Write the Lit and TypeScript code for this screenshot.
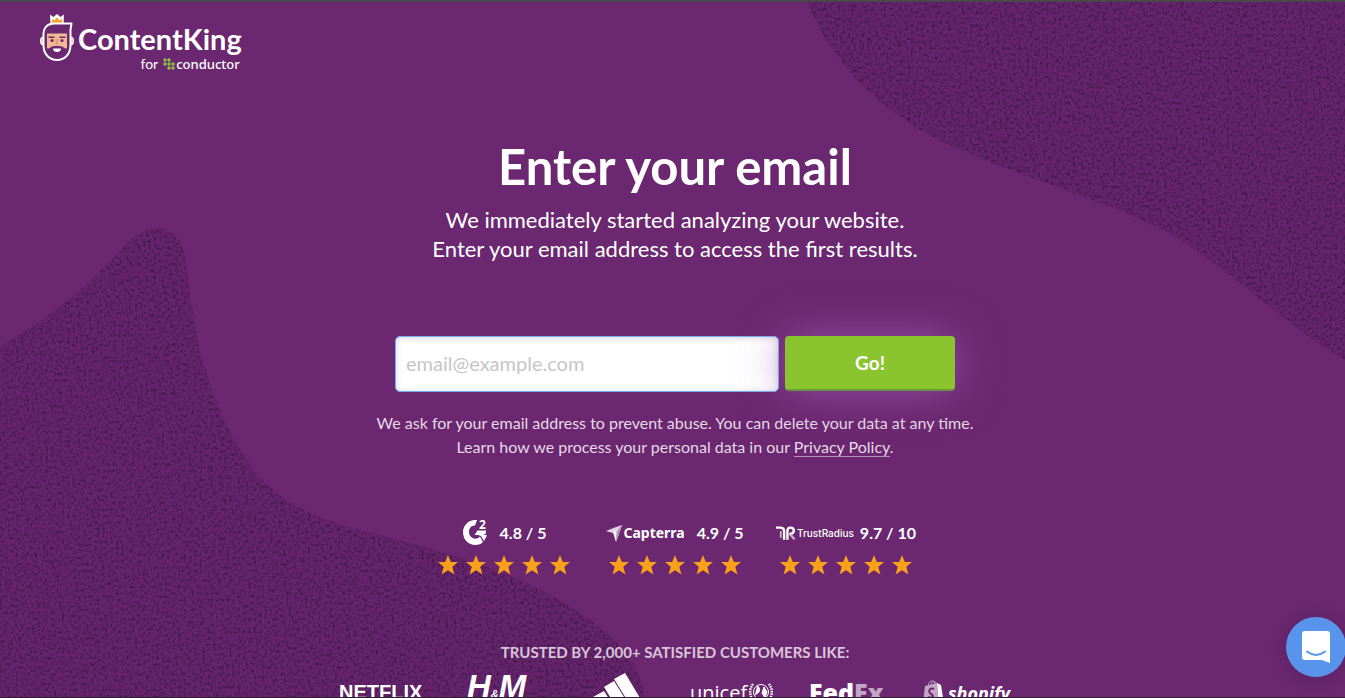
import { LitElement, html, css, svg } from "lit";
import { customElement } from "lit/decorators.js";

@customElement("app-backdrop")
class AppBackdrop extends LitElement {
  static styles = css`
    :host { display: block; }
    .art { display: block; width: 100%; height: 100%; }
  `;
  render() {
    return html`
      <svg class="art" viewBox="0 0 1345 698" preserveAspectRatio="xMinYMin slice" aria-hidden="true">
        <defs>
          <filter id="grain" x="0" y="0" width="100%" height="100%" color-interpolation-filters="sRGB">
            <feTurbulence type="fractalNoise" baseFrequency="0.37 0.31" numOctaves="4" seed="11" result="noise" />
            <feColorMatrix in="noise" type="matrix"
              values="0 0 0 0 0.24  0 0 0 0 0.09  0 0 0 0 0.28  2.4 0 0 0 -1.1" result="specks" />
            <feComposite in="specks" in2="SourceGraphic" operator="in" result="clipped" />
            <feMerge><feMergeNode in="SourceGraphic" /><feMergeNode in="clipped" /></feMerge>
          </filter>
        </defs>
        <g fill="#65246b" filter="url(#grain)">
          <path d="M0 344 C50 318 92 280 128 241 C148 219 178 222 184 251 C189 280 192 314 200 348 C212 396 232 443 262 478 C288 504 310 512 345 524 C395 538 475 554 545 590 C600 620 643 653 644 698 L0 698Z" />
          <path d="M808 0 C820 34 840 60 865 86 C915 134 970 153 1020 171 C1075 192 1120 206 1163 228 C1230 265 1275 316 1345 358 L1345 0Z" />
        </g>
      </svg>
    `;
  }
}

@customElement("brand-logo")
class BrandLogo extends LitElement {
  static styles = css`
    :host { display: block; font-family: Lato, "Open Sans", sans-serif; color: #fff; }
    .brand { display: inline-flex; gap: 4px; align-items: flex-start; color: inherit; text-decoration: none; }
    .words { display: flex; flex-direction: column; align-items: flex-end; padding-top: 7px; }
    .name { font-size: 29px; line-height: 36px; font-weight: 700; }
    .by { display: flex; align-items: center; font-size: 14px; line-height: 14px; gap: 5px; padding-right: 2px; }
    .conductor { display: flex; align-items: center; gap: 1px; font-family: "Noto Sans", sans-serif; font-size: 13px; font-weight: 500; }
  `;
  render() {
    return html`
      <a class="brand" href="#" aria-label="ContentKing for conductor">
        <svg width="34" height="48" viewBox="0 0 34 48" aria-hidden="true">
          <path d="M10.500 10 L10 0.500 L13.500 3 L17 0 L20.500 3 L24 0.500 L23.500 10Z" fill="#fff" />
          <path d="M12 9.500V5l2.500 1.500L17 3.500l2.500 3L22 5v4.500Z" fill="#f5a11c" />
          <ellipse cx="2.500" cy="27" rx="2" ry="4" fill="#f6c6a8" stroke="#fff" stroke-width="1" />
          <ellipse cx="31.500" cy="27" rx="2" ry="4" fill="#f6c6a8" stroke="#fff" stroke-width="1" />
          <path d="M3.500 22 C3 13 8 9.500 14 9.500 H31.500 L30.500 16 V31 C30.500 41 24 46 17 46 C10 46 3.500 41 3.500 31Z" fill="#6b276f" stroke="#fff" stroke-width="2" stroke-linejoin="round" />
          <path d="M7 19.500H27V36H7Z" fill="#f3b995" />
          <path d="M8.500 22.500h6v1.500h-6zM19.500 22.500h6v1.500h-6z" fill="#6b276f" />
          <circle cx="12" cy="26.500" r="1.600" fill="#6b276f" /><circle cx="22" cy="26.500" r="1.600" fill="#6b276f" />
          <path d="M15.500 25h3v6h-3z" fill="#e59b78" />
          <path d="M6 33 C9 37 10 32 14 32 H20 C24 32 25 37 28 33 V35 C27 40 23 42.500 17 42.500 C11 42.500 7 40 6 35Z" fill="#6b276f" />
          <path d="M13 34.500h8c0 2.500-2 3.500-4 3.500s-4-1-4-3.500Z" fill="#fff" />
        </svg>
        <span class="words">
          <span class="name">ContentKing</span>
          <span class="by">
            <span>for</span>
            <span class="conductor">
              <svg width="12" height="12" viewBox="0 0 12 12" fill="#8cc63f" aria-hidden="true">
                ${[[2, 2], [6, 2], [2, 6], [6, 6], [10, 6], [6, 10], [10, 10]].map(
                  ([x, y]) => svg`<circle cx=${x} cy=${y} r="1.700" />`
                )}
              </svg>
              <span>conductor</span>
            </span>
          </span>
        </span>
      </a>
    `;
  }
}

@customElement("rating-strip")
class RatingStrip extends LitElement {
  static styles = css`
    :host { display: block; font-family: Lato, sans-serif; color: #fff; }
    .list { display: grid; grid-template-columns: repeat(3, 132px); gap: 39px; justify-content: center; margin: 0; padding: 0; list-style: none; }
    .top { display: flex; align-items: center; justify-content: center; height: 28px; white-space: nowrap; gap: 12px; }
    .top.tight { gap: 6px; }
    .vendor { display: flex; align-items: center; gap: 1px; }
    .capterra { font: 700 14px/20px "Noto Sans", sans-serif; }
    .radius { font: 500 10px/14px Inter, sans-serif; }
    .score { font-size: 16px; line-height: 24px; font-weight: 700; }
    .stars { display: flex; gap: 8px; padding-top: 8px; }
    .g2 { overflow: visible; }
    .two { font: 700 12px "Open Sans", sans-serif; }
  `;
  private g2 = html`
    <svg class="g2" width="26" height="28" viewBox="0 0 26 28" fill="#fff" role="img" aria-label="G2">
      <path d="M15 1 C7 0 1 6 1 13 C1 21 7 26 13 26 C17 26 19 25 21 23 L18 17.500 C14 22 7 19 7 13 C7 8.500 10 6.500 13 6.500Z" />
      <path d="M12.500 16 L15.500 11.500 H24 V14.500 L20.500 16Z" />
      <path d="M14.500 15.500 H22 L25 16.500 L22 22 L19 17Z" />
      <text class="two" x="17" y="10">2</text>
    </svg>
  `;
  private capterra = html`
    <span class="vendor">
      <svg width="16" height="18" viewBox="0 0 16 18" aria-hidden="true">
        <path d="M0 7 L9 4 L16 1Z" fill="#fff" />
        <path d="M0 7 L7 9 L16 1Z" fill="#e4d6e6" />
        <path d="M7 8.500 L16 1 L10 18Z" fill="#fff" />
        <path d="M10.500 7 L16 1 L10 18Z" fill="#b790bc" />
      </svg>
      <span class="capterra">Capterra</span>
    </span>
  `;
  private radius = html`
    <span class="vendor">
      <svg width="20" height="14" viewBox="0 0 21 14" fill="none" stroke-width="2.500" aria-hidden="true">
        <path d="M0 1.300 H5 Q8.500 1.500 8.500 5 V14" stroke="#fff" />
        <path d="M5 5 V12" stroke="#c9aecb" stroke-width="2" />
        <path d="M12 14 V5 Q12 1.300 15 1.300 Q18.700 1.300 18.700 4.500 Q18.500 8 14 8" stroke="#fff" />
        <path d="M15 8.500 L19.500 13.500" stroke="#c9aecb" />
      </svg>
      <span class="radius">TrustRadius</span>
    </span>
  `;
  private star = () => html`
    <svg width="20" height="20" viewBox="0 0 20 20" fill="#f9a11b" aria-hidden="true">
      <path d="M10 0 L12.800 7 H20 L14.300 11.800 L16.400 19.500 L10 15.200 L3.600 19.500 L5.700 11.800 L0 7 H7.200Z" />
    </svg>
  `;
  render() {
    const items = [
      { logo: this.g2, score: "4.8 / 5", tight: false },
      { logo: this.capterra, score: "4.9 / 5", tight: false },
      { logo: this.radius, score: "9.7 / 10", tight: true },
    ];
    return html`
      <ul class="list">
        ${items.map(
          (item) => html`
            <li>
              <div class="top ${item.tight ? "tight" : ""}">${item.logo}<span class="score">${item.score}</span></div>
              <div class="stars">${[1, 2, 3, 4, 5].map(this.star)}</div>
            </li>
          `
        )}
      </ul>
    `;
  }
}

@customElement("customer-logos")
class CustomerLogos extends LitElement {
  static styles = css`
    :host { display: block; color: #fff; }
    .row { display: flex; justify-content: center; align-items: flex-start; height: 40px; margin: 0; padding: 0; list-style: none; white-space: nowrap; }
    .item { display: flex; align-items: flex-start; }
    .netflix { width: 128px; padding-top: 7px; font: 700 20px/24px "Liberation Sans", sans-serif; }
    .hm { width: 126px; font: italic 700 33px/28px "Liberation Sans", sans-serif; align-items: flex-end; }
    .amp { font-size: 11px; line-height: 14px; }
    .adidas { width: 97px; }
    .unicef { width: 119px; padding-top: 6px; gap: 2px; font: 400 20px/28px "Open Sans", sans-serif; }
    .globe { margin-top: 2px; }
    .fedex { width: 114px; padding-top: 4px; font: 800 25px/30px "Open Sans", sans-serif; }
    .ex { color: #c3a6c6; }
    .shopify { width: 88px; padding-top: 7px; gap: 4px; font: italic 700 18px/26px "Open Sans", sans-serif; }
  `;
  render() {
    return html`
      <ul class="row">
        <li class="item netflix">NETFLIX</li>
        <li class="item hm">H<span class="amp">&amp;</span>M</li>
        <li class="item adidas">
          <svg width="58" height="40" viewBox="0 0 58 40" fill="#fff" role="img" aria-label="adidas">
            <path d="M21 6 L32 0 L56 40 H42Z" />
            <path d="M11 14 L21 8 L41 40 H27Z" />
            <path d="M0 24 L11 18 L25 40 H10Z" />
          </svg>
        </li>
        <li class="item unicef">
          unicef
          <svg class="globe" width="24" height="24" viewBox="0 0 24 24" fill="none" stroke="#fff" aria-hidden="true">
            <circle cx="12" cy="11" r="7.500" />
            <path d="M8 5c3 1 3 4 2 6l-4 3M15 6l3 5-2 6-3-5Z" fill="#fff" />
            <path d="M4 3C0 8 0 16 6 21M20 3c4 5 4 13-2 18" stroke-width="2.500" stroke-dasharray="1.500 1" />
          </svg>
        </li>
        <li class="item fedex">Fed<span class="ex">Ex</span></li>
        <li class="item shopify">
          <svg width="21" height="26" viewBox="0 0 21 26" aria-hidden="true">
            <path d="M2 6 L14 3 L16 26 L0 23Z" fill="#c3a6c6" />
            <path d="M14 3 L18 5 L21 24 L16 26Z" fill="#fff" />
            <path d="M5 6 C6 0 11 -1 12 4M8 5C9 1 12 0 14 4" fill="none" stroke="#c3a6c6" />
            <path d="M11 9C6 7 5 12 8 14C12 16 9 19 5 17" fill="none" stroke="#6b276f" stroke-width="2" />
          </svg>
          shopify
        </li>
      </ul>
    `;
  }
}

@customElement("app-root")
class AppRoot extends LitElement {
  static styles = css`
    :host { display: block; font-family: Lato, "Open Sans", sans-serif; color: #fff; }
    .page { position: relative; height: 100vh; overflow: hidden; box-sizing: border-box; background: #6b276f; border-top: 2px solid #4a484c; border-bottom: 1px solid #2b2030; }
    .backdrop { position: absolute; inset: 0; }
    .content { position: relative; display: flex; flex-direction: column; }
    .header { padding: 12px 40px 0; height: 62px; }
    .main { display: flex; flex-direction: column; align-items: center; padding: 61px 0 0 5px; text-align: center; }
    .title { margin: 0; font-size: 49px; line-height: 58px; font-weight: 700; }
    .lead { margin: 10px 0 0; font-size: 22px; line-height: 29px; }
    .form { position: relative; display: grid; grid-template-columns: 384px 170px; gap: 6px; margin: 73px 0 0; }
    .label { position: absolute; left: 10px; top: 16px; opacity: 0; pointer-events: none; font-size: 16px; line-height: 24px; }
    .email { box-sizing: border-box; width: 100%; height: 56px; padding: 0 10px 2px; border: 1px solid #6fb2f2; border-radius: 5px; background: #fff; box-shadow: inset 0 1px 6px rgba(60, 40, 70, 0.2); font: 400 20px/24px Lato, sans-serif; color: #333; outline: none; }
    .email::placeholder { color: #c6c6c8; opacity: 1; }
    .go { height: 55px; padding: 0; border: 0; border-bottom: 2px solid #6f9440; border-radius: 4px; background: #8ac42f; color: #fff; font: 700 19px/24px Lato, sans-serif; box-shadow: 0 0 44px rgba(165, 95, 190, 0.7); }
    .note { margin: 19px 0 0; font-size: 16px; line-height: 24px; color: #e6dae7; }
    .link { color: inherit; text-decoration: none; border-bottom: 1px solid #b592b8; }
    .ratings { margin-top: 60px; }
    .trusted { margin: 67px 0 0; font-size: 15px; line-height: 20px; font-weight: 700; color: #d8c5da; text-transform: uppercase; }
    .customers { margin-top: 11px; }
    .chat { position: absolute; right: -1px; bottom: 20px; width: 60px; height: 60px; padding: 0; border: 0; border-radius: 50%; background: #5894ec; box-shadow: 0 2px 20px rgba(0, 0, 0, 0.14); display: grid; place-items: center; }
  `;
  render() {
    return html`
      <div class="page">
        <app-backdrop class="backdrop"></app-backdrop>
        <div class="content">
          <header class="header"><brand-logo></brand-logo></header>
          <main class="main">
            <h1 class="title">Enter your email</h1>
            <p class="lead">We immediately started analyzing your website.<br />Enter your email address to access the first results.</p>
            <form class="form" @submit=${(e: Event) => e.preventDefault()}>
              <label class="label" for="email">Email address</label>
              <input class="email" id="email" type="email" placeholder="email@example.com" />
              <button class="go" type="submit">Go!</button>
            </form>
            <p class="note">
              We ask for your email address to prevent abuse. You can delete your data at any time.<br />
              Learn how we process your personal data in our <a class="link" href="#">Privacy Policy</a>.
            </p>
            <rating-strip class="ratings"></rating-strip>
            <p class="trusted">Trusted by 2,000+ satisfied customers like:</p>
            <customer-logos class="customers"></customer-logos>
          </main>
        </div>
        <button class="chat" type="button" aria-label="Open chat">
          <svg width="28" height="32" viewBox="0 0 28 32" aria-hidden="true">
            <path d="M3 0H25Q28 0 28 3V32L20 29H3Q0 29 0 26V3Q0 0 3 0Z" fill="#fff" />
            <path d="M5 20.500 Q14 27.500 23 20.500" fill="none" stroke="#5894ec" stroke-width="2" stroke-linecap="round" />
          </svg>
        </button>
      </div>
    `;
  }
}
